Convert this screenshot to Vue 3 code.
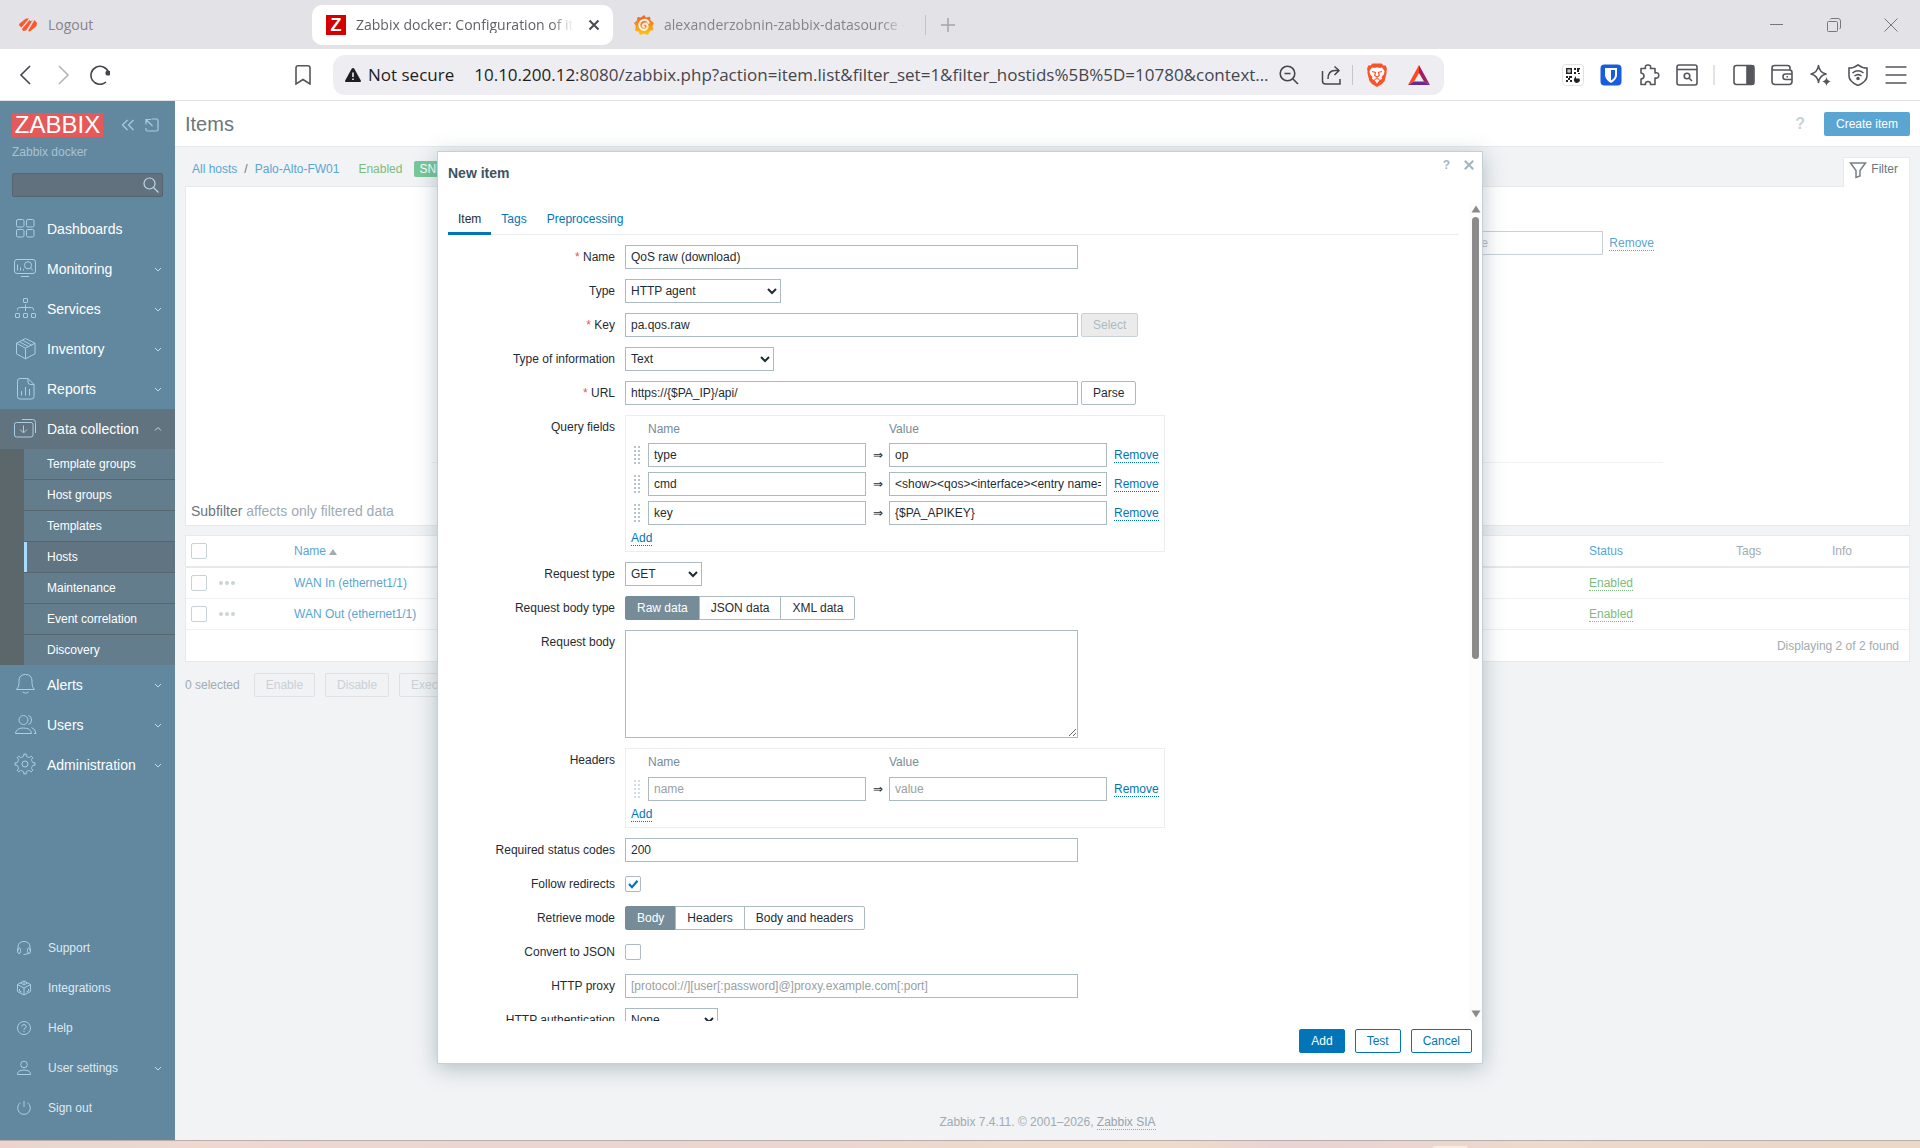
<template>
  <div class="window">
    <!-- Browser tabs -->
    <div class="tabstrip">
      <div class="tab tab-first">
        <svg class="i20" viewBox="0 0 20 20" fill="#fa582d">
          <path d="M1 9 8 3.500 11 3.500 3.500 12.500 1.500 11z M4 14 11.500 5 13 6.500 15 4.500 11 11 8 15.500 5 16z M10 16 16.500 5 19 8 18.500 11 12 16.500z" />
        </svg>
        <span>Logout</span>
      </div>
      <div class="tab tab-active">
        <span class="z-badge">Z</span>
        <span class="tab-title">Zabbix docker: Configuration of items</span>
        <button class="plain" aria-label="Close tab">
          <svg class="i12" viewBox="0 0 12 12" fill="none" stroke="#4a4b50" stroke-width="2"><path d="M1.500 1.500l9 9M10.500 1.500l-9 9" /></svg>
        </button>
      </div>
      <div class="tab tab-last">
        <svg class="i20" viewBox="0 0 20 20">
          <defs>
            <linearGradient id="graf" x1="0" y1="0" x2="0" y2="1"><stop offset="0" stop-color="#f15a29" /><stop offset="1" stop-color="#fdc80c" /></linearGradient>
          </defs>
          <path fill="url(#graf)" d="M10 0l2 2.500 4-.8.5 3.500L20 8l-1.500 3 1 4-3.500.8L14 20l-4-1.200L6 20l-1.500-3.500L1 15.500 1.800 11 0 8l3-2.500L3.500 2 7 2.500z" />
          <path fill="none" stroke="#f2f1f4" stroke-width="2" d="M15 8.500c-1-3-3.500-4-5.500-3.500-3 .5-5 3.500-4 6.500s4 4 6 3 2.800-3.500 1.500-5-3.500-1-4 .5.500 2.300 1.700 2" />
        </svg>
        <span class="tab-title">alexanderzobnin-zabbix-datasource - plugins</span>
      </div>
      <span class="tab-divider"></span>
      <button class="plain new-tab" aria-label="New tab">
        <svg class="i14" viewBox="0 0 14 14" fill="none" stroke="#a5a4ab" stroke-width="1.500"><path d="M7 0v14M0 7h14" /></svg>
      </button>
      <div class="win-buttons">
        <button class="plain" aria-label="Minimize"><svg class="i14" viewBox="0 0 14 14" fill="none" stroke="#77767c"><path d="M0 6.500h13" /></svg></button>
        <button class="plain" aria-label="Restore"><svg class="i14" viewBox="0 0 14 14" fill="none" stroke="#77767c"><rect x=".5" y="3.500" width="10" height="10" rx="1" /><path d="M3 1.500q.5-1 2-1h6q2.500 0 2.500 2.500v6q0 1.500-1 2" /></svg></button>
        <button class="plain" aria-label="Close"><svg class="i14" viewBox="0 0 14 14" fill="none" stroke="#77767c"><path d="M.5.500l13 13M13.500.500l-13 13" /></svg></button>
      </div>
    </div>

    <!-- Browser toolbar -->
    <div class="toolbar">
      <div class="nav-buttons">
        <button class="plain" aria-label="Back"><svg class="i20" viewBox="0 0 20 20" fill="none" stroke="#45464c" stroke-width="1.600"><path d="M14 1 5 10l9 9" /></svg></button>
        <button class="plain" aria-label="Forward"><svg class="i20" viewBox="0 0 20 20" fill="none" stroke="#b5b5ba" stroke-width="1.600"><path d="M6 1l9 9-9 9" /></svg></button>
        <button class="plain" aria-label="Reload"><svg class="i20" viewBox="0 0 20 20" fill="none" stroke="#45464c" stroke-width="1.600"><path d="M16 17A9 9 0 1 1 18.500 7.500" /><circle cx="18" cy="8" r="1.800" fill="#45464c" /></svg></button>
      </div>
      <button class="plain bookmark" aria-label="Bookmark"><svg class="i20" viewBox="0 0 20 20" fill="none" stroke="#55565c" stroke-width="1.600"><path d="M3 19V3q0-2.200 2.200-2.200h9.600Q17 .8 17 3v16l-7-4.500z" /></svg></button>
      <div class="address">
        <svg class="i16" viewBox="0 0 16 16"><path fill="#1d1d22" d="M8 1q.8 0 1.300.8l6.400 11.500q.8 1.700-1.200 1.700h-13q-2 0-1.200-1.700L6.700 1.800Q7.200 1 8 1z" /><path stroke="#eeedf2" stroke-width="1.600" d="M8 5.500v4.500M8 11.500v1.600" /></svg>
        <span class="secure">Not secure</span>
        <span class="url"><b>10.10.200.12</b>:8080/zabbix.php?action=item.list&amp;filter_set=1&amp;filter_hostids%5B%5D=10780&amp;context…</span>
        <button class="plain" aria-label="Zoom"><svg class="i20" viewBox="0 0 20 20" fill="none" stroke="#45464c" stroke-width="1.600"><circle cx="8.500" cy="8.500" r="7.300" /><path d="M14 14l5 5M5.500 8.500h6" /></svg></button>
        <button class="plain share" aria-label="Share"><svg class="i20" viewBox="0 0 20 20" fill="none" stroke="#45464c" stroke-width="1.500"><path d="M1.500 6v10q0 3 3 3H19v-5M13.500 1.500 18 5.500l-4.500 4.500M18 5.500h-4q-7 0-7 8.500" /></svg></button>
        <span class="bar-divider"></span>
        <button class="plain" aria-label="Shields">
          <svg class="i24" viewBox="0 0 24 24"><path fill="#fb542b" d="M7.500.500h9l2 2h2.300l1.200 3.500-.6 2 .2 2-2 8-2.600 3L12 24l-5-3-2.600-3-2-8 .2-2L2 6l1.200-3.500h2.300z" /><path fill="#fff" d="M7 4.500l2.500.5L12 4.300l2.500.7 2.500-.5 2.500 3.500-.5 3-2.500 3 .5 2-2.500 1L12 20.500 9.500 17 7 16l.5-2L5 11l-.5-3z" /><path fill="none" stroke="#fb542b" stroke-width="1.200" d="M7 8.500l3.500 1-.8 3 2.300 1.500 2.300-1.500-.8-3 3.500-1M9.500 16.500l2.500-1 2.500 1M12 14v1.500" /></svg>
        </button>
        <button class="plain bat" aria-label="Rewards">
          <svg class="i24" viewBox="0 0 24 24"><path fill="#ff4724" d="M12 2v8l-5 8.500L1 22z" /><path fill="#9e1f63" d="M12 2l11 20-6-3.500L12 10z" /><path fill="#662d91" d="M1 22l6-3.500h10l6 3.500z" /></svg>
        </button>
      </div>
      <div class="extensions">
        <button v-for="e in extensions" :key="e.name" class="plain" :class="e.name" :aria-label="e.name">
          <svg class="i22" viewBox="0 0 22 22" fill="none" stroke="#55565c" stroke-width="1.600" v-html="e.body"></svg>
        </button>
      </div>
    </div>

    <!-- Page -->
    <div class="page">
      <aside class="sidebar">
        <div class="brand">
          <a href="#" class="logo">ZABBIX</a>
          <button class="plain" aria-label="Collapse sidebar"><svg class="i14" viewBox="0 0 14 14" fill="none" stroke="#a9cbe0" stroke-width="1.200"><path d="M6.500 2 1.500 7l5 5M12.500 2l-5 5 5 5" /></svg></button>
          <button class="plain" aria-label="Hide sidebar"><svg class="i14" viewBox="0 0 14 14" fill="none" stroke="#a9cbe0" stroke-width="1.200"><path d="M6.500 1h5q1.500 0 1.500 1.500v9q0 1.500-1.500 1.500h-9Q1 13 1 11.500V10M1 6.500V1.500h5M1.500 2l6 6" /></svg></button>
        </div>
        <div class="server">Zabbix docker</div>
        <form class="search" @submit.prevent>
          <input type="text" aria-label="Search" />
          <button class="plain" aria-label="Search"><svg class="i16" viewBox="0 0 16 16" fill="none" stroke="#b9d8ea" stroke-width="1.200"><circle cx="6.500" cy="6.500" r="5.500" /><path d="M10.500 10.500l5 5" /></svg></button>
        </form>
        <nav class="menu">
          <template v-for="m in menu" :key="m.label">
            <a href="#" class="menu-item" :class="{ open: m.children }">
              <svg class="i24" viewBox="0 0 24 24" fill="none" stroke="#a9cfe6" v-html="m.icon"></svg>
              <span>{{ m.label }}</span>
              <svg v-if="m.arrow" class="chev" viewBox="0 0 8 8" fill="none" stroke="#c4dbe8"><path :d="m.children ? 'M1 5.500l3-3 3 3' : 'M1 3l3 3 3-3'" /></svg>
            </a>
            <div v-if="m.children" class="submenu">
              <a v-for="c in m.children" :key="c" href="#" :class="{ selected: c === 'Hosts' }">{{ c }}</a>
            </div>
          </template>
        </nav>
        <nav class="menu-bottom">
          <a v-for="m in bottomMenu" :key="m.label" href="#">
            <svg class="i16" viewBox="0 0 16 16" fill="none" stroke="#a9cfe6" v-html="m.icon"></svg>
            <span>{{ m.label }}</span>
            <svg v-if="m.arrow" class="chev" viewBox="0 0 8 8" fill="none" stroke="#c4dbe8"><path d="M1 3l3 3 3-3" /></svg>
          </a>
        </nav>
      </aside>

      <main class="main">
        <header class="page-header">
          <h1>Items</h1>
          <a href="#" class="help">?</a>
          <button class="create">Create item</button>
        </header>
        <div class="content">
          <div class="crumbs-row">
            <div class="crumbs">
              <a href="#">All hosts</a><span class="slash">/</span><a href="#">Palo-Alto-FW01</a>
              <span class="enabled">Enabled</span>
              <span class="badge">SNMP</span>
            </div>
            <button class="filter-tab">
              <svg class="i18" viewBox="0 0 18 18" fill="none" stroke="#75808a" stroke-width="1.500"><path d="M1.500 2h15L11 9.500V15l-4 1.500v-7z" /></svg>
              Filter
            </button>
          </div>
          <section class="panel filter">
            <div class="filter-row">
              <input type="text" placeholder="value" aria-label="Tag value" />
              <a href="#" class="dotted">Remove</a>
            </div>
            <div class="filter-line"></div>
            <div class="subfilter">Subfilter <span>affects only filtered data</span></div>
          </section>
          <table class="panel items">
            <colgroup><col class="c-check" /><col class="c-dots" /><col /><col class="c-status" /><col class="c-tags" /><col class="c-info" /></colgroup>
            <thead>
              <tr>
                <th><input type="checkbox" class="check" aria-label="Select all" /></th>
                <th></th>
                <th><a href="#">Name</a><i class="sort"></i></th>
                <th><a href="#">Status</a></th>
                <th>Tags</th>
                <th>Info</th>
              </tr>
            </thead>
            <tbody>
              <tr v-for="name in hostItems" :key="name">
                <td><input type="checkbox" class="check" :aria-label="name" /></td>
                <td><button class="plain dots" aria-label="More"><i></i><i></i><i></i></button></td>
                <td><a href="#">{{ name }}</a></td>
                <td><a href="#" class="dotted green">Enabled</a></td>
                <td></td>
                <td></td>
              </tr>
            </tbody>
            <tfoot>
              <tr><td colspan="6">Displaying 2 of 2 found</td></tr>
            </tfoot>
          </table>
          <div class="actions">
            <span>0 selected</span>
            <button v-for="a in ['Enable', 'Disable', 'Execute now']" :key="a" disabled>{{ a }}</button>
          </div>
        </div>
        <footer class="page-footer">Zabbix 7.4.11. © 2001–2026, <a href="#" class="dotted">Zabbix SIA</a></footer>
      </main>
    </div>
    <div class="desktop"><span></span></div>

    <!-- New item dialog -->
    <div class="overlay">
      <div class="modal" role="dialog" aria-labelledby="modal-title">
        <div class="modal-head">
          <h2 id="modal-title">New item</h2>
          <a href="#" class="modal-help">?</a>
          <button class="plain" aria-label="Close"><svg class="i10" viewBox="0 0 10 10" fill="none" stroke="#a3b4bd" stroke-width="2"><path d="M.8.800l8.400 8.400M9.200.800.8 9.200" /></svg></button>
        </div>
        <div class="modal-body">
          <div class="scroll-area">
            <div class="tabs">
              <a v-for="t in ['Item', 'Tags', 'Preprocessing']" :key="t" href="#" :class="{ active: t === tab }" @click.prevent="tab = t">{{ t }}</a>
            </div>
            <form class="form" @submit.prevent>
              <label for="name" class="req">Name</label>
              <div><input id="name" v-model="form.name" type="text" class="wide" /></div>

              <label for="type">Type</label>
              <div><select id="type" class="w-type"><option>HTTP agent</option></select></div>

              <label for="key" class="req">Key</label>
              <div class="with-btn"><input id="key" v-model="form.key" type="text" class="wide" /><button class="btn" disabled>Select</button></div>

              <label for="value-type">Type of information</label>
              <div><select id="value-type" class="w-info"><option>Text</option></select></div>

              <label for="url" class="req">URL</label>
              <div class="with-btn"><input id="url" v-model="form.url" type="text" class="wide" /><button class="btn">Parse</button></div>

              <template v-for="g in pairGroups" :key="g.label">
                <template v-if="g.label === 'Headers'">
                  <label for="request-type">Request type</label>
                  <div><select id="request-type" class="w-request"><option>GET</option></select></div>

                  <span class="label">Request body type</span>
                  <div class="radios" role="radiogroup">
                    <label v-for="o in ['Raw data', 'JSON data', 'XML data']" :key="o"><input v-model="form.bodyType" type="radio" name="body-type" :value="o" /><span>{{ o }}</span></label>
                  </div>

                  <label for="posts">Request body</label>
                  <div class="area"><textarea id="posts" class="wide"></textarea></div>
                </template>
                <span class="label">{{ g.label }}</span>
                <div>
                  <table class="pairs">
                    <thead>
                      <tr><th class="p-drag"></th><th>Name</th><th></th><th>Value</th><th></th></tr>
                    </thead>
                    <tbody>
                      <tr v-for="(r, i) in g.rows" :key="i">
                        <td class="p-drag"><span class="drag" :class="{ off: g.rows.length === 1 }"></span></td>
                        <td><input v-model="r.name" type="text" placeholder="name" :aria-label="g.label + ' name'" /></td>
                        <td class="p-arrow">⇒</td>
                        <td><input v-model="r.value" type="text" placeholder="value" :aria-label="g.label + ' value'" /></td>
                        <td class="p-remove"><a href="#" class="dotted">Remove</a></td>
                      </tr>
                    </tbody>
                    <tfoot>
                      <tr><td colspan="5"><a href="#" class="dotted">Add</a></td></tr>
                    </tfoot>
                  </table>
                </div>
              </template>

              <label for="codes">Required status codes</label>
              <div><input id="codes" v-model="form.codes" type="text" class="wide" /></div>

              <label for="follow">Follow redirects</label>
              <div class="check-row"><input id="follow" type="checkbox" class="check" checked /></div>

              <span class="label">Retrieve mode</span>
              <div class="radios" role="radiogroup">
                <label v-for="o in ['Body', 'Headers', 'Body and headers']" :key="o"><input v-model="form.retrieve" type="radio" name="retrieve" :value="o" /><span>{{ o }}</span></label>
              </div>

              <label for="to-json">Convert to JSON</label>
              <div class="check-row"><input id="to-json" type="checkbox" class="check" /></div>

              <label for="proxy">HTTP proxy</label>
              <div><input id="proxy" type="text" class="wide" placeholder="[protocol://][user[:password]@]proxy.example.com[:port]" /></div>

              <label for="auth">HTTP authentication</label>
              <div><select id="auth" class="w-auth"><option>None</option></select></div>
            </form>
          </div>
          <div class="scrollbar">
            <svg viewBox="0 0 10 8"><path fill="#8b8b8b" d="M5 .5 9.500 7.500H.5z" /></svg>
            <div class="track"><div class="thumb"></div></div>
            <svg viewBox="0 0 10 8"><path fill="#8b8b8b" d="M5 7.500.5.500h9z" /></svg>
          </div>
        </div>
        <div class="modal-foot">
          <button class="btn primary">Add</button>
          <button class="btn blue">Test</button>
          <button class="btn blue">Cancel</button>
        </div>
      </div>
    </div>
  </div>
</template>

<script setup>
import { ref, reactive } from 'vue'

const tab = ref('Item')

const form = reactive({
  name: 'QoS raw (download)',
  key: 'pa.qos.raw',
  url: 'https://{$PA_IP}/api/',
  bodyType: 'Raw data',
  codes: '200',
  retrieve: 'Body'
})

const pairGroups = reactive([
  {
    label: 'Query fields',
    rows: [
      { name: 'type', value: 'op' },
      { name: 'cmd', value: '<show><qos><interface><entry name="ethernet1/1">' },
      { name: 'key', value: '{$PA_APIKEY}' }
    ]
  },
  { label: 'Headers', rows: [{ name: '', value: '' }] }
])

const hostItems = ['WAN In (ethernet1/1)', 'WAN Out (ethernet1/1)']

// Toothed outline for the settings icon
const gear = (cx, cy, outer, inner, teeth) => {
  const pts = []
  for (let k = 0; k < teeth; k++) {
    const a = (k / teeth) * Math.PI * 2 - Math.PI / 2
    const step = Math.PI / teeth
    for (const [d, r] of [[-0.75, inner], [-0.4, inner + 0.4], [-0.32, outer], [0.32, outer], [0.4, inner + 0.4], [0.75, inner]]) {
      pts.push(`${(cx + Math.cos(a + d * step) * r).toFixed(2)} ${(cy + Math.sin(a + d * step) * r).toFixed(2)}`)
    }
  }
  return `M${pts.join('L')}Z`
}

const menu = [
  { label: 'Dashboards', icon: '<rect x="3.500" y="2.500" width="7.500" height="7.500" rx="1.500"/><rect x="13.500" y="2.500" width="7.500" height="7.500" rx="1.500"/><rect x="3.500" y="12.500" width="7.500" height="7.500" rx="1.500"/><rect x="13.500" y="12.500" width="7.500" height="7.500" rx="1.500"/>' },
  { label: 'Monitoring', arrow: true, icon: '<rect x="1.500" y="2.500" width="21" height="14" rx="2.500"/><path d="M8 19.500h8M4.500 7.500v6M7.500 10.500v3M10.500 12v1.500M17.500 11l2.500 2.500"/><circle cx="15" cy="8.300" r="3.600"/>' },
  { label: 'Services', arrow: true, icon: '<rect x="10.500" y="1.500" width="4" height="4" rx=".5"/><path d="M12.500 7.500V14M4.500 13.500v-1q0-2 2-2h12q2 0 2 2v1"/><rect x="2.500" y="16.500" width="4" height="4" rx=".5"/><rect x="10.500" y="16.500" width="4" height="4" rx=".5"/><rect x="18.500" y="16.500" width="4" height="4" rx=".5"/>' },
  { label: 'Inventory', arrow: true, icon: '<path d="M12.500 1.500 22 6.200v10.600l-9.500 5-9-5V6.200zM3.500 6.200l9 5 9.500-5M12.500 11.200v10.600M9.500 3.200l9 4.800M6.500 4.800l9 4.800"/>' },
  { label: 'Reports', arrow: true, icon: '<path d="M15 1.500H7q-2.500 0-2.500 2.500v15.500q0 2.500 2.500 2.500h11.500q2.500 0 2.500-2.500V7.500zM15 1.500V5q0 2.500 2.500 2.500H21M8.500 14v4.500M12.500 10v8.500M16.500 12v6.500"/>' },
  {
    label: 'Data collection',
    arrow: true,
    icon: '<rect x="1.500" y="5.500" width="18.500" height="14.500" rx="2"/><path d="M9 2.500h10.500q3 0 3 3V16M10.500 8.500v7M7 12.500l3.500 3.500 3.500-3.500"/>',
    children: ['Template groups', 'Host groups', 'Templates', 'Hosts', 'Maintenance', 'Event correlation', 'Discovery']
  },
  { label: 'Alerts', arrow: true, icon: '<path d="M3.500 16.500h18q-2.500-2.500-2.500-6V8q0-6.500-6.500-6.500T6 8v2.500q0 3.500-2.500 6zM9.500 19q3 2.500 6 0"/>' },
  { label: 'Users', arrow: true, icon: '<circle cx="10.500" cy="7" r="4.500"/><path d="M2.500 20.500q.5-5.500 8-5.500t8 5.500zM15.500 2.500q3 .5 3 4.500t-3 4.500M18.500 14.500q4 1.500 4.500 6h-2"/>' },
  { label: 'Administration', arrow: true, icon: `<path d="${gear(12, 11, 10, 7.6, 8)}" stroke-linejoin="round"/><circle cx="12" cy="11" r="3"/>` }
]

const bottomMenu = [
  { label: 'Support', icon: '<path d="M2 11V7.500Q2 1.500 8 1.500t6 6V11M1.500 9q3-2 3 .5v2q0 2-1.500 2T1.500 11zM14.500 9q-3-2-3 .5v2q0 2 1.500 2t1.500-2.500zM13 13q-1.500 1.500-5.500 1.500"/>' },
  { label: 'Integrations', icon: '<path d="M8 1l6.500 3.500v7L8 15l-6.500-3.500v-7zM1.500 4.500 8 8l6.500-3.500M8 8v7M4.500 2.800 8 5l3.500-2.200M3.500 9v2l2 1M12.500 9v2l-2 1M8 1v3"/>' },
  { label: 'Help', icon: '<circle cx="8" cy="8" r="6.500"/><path d="M5.800 6.500Q6 4.500 8 4.500t2.200 2Q10.200 8 8 8.800v1M8 10.800v1.400"/>' },
  { label: 'User settings', arrow: true, icon: '<circle cx="8" cy="4.500" r="3.300"/><path d="M1.500 14.500q0-4.500 6.500-4.500t6.500 4.500z"/>' },
  { label: 'Sign out', icon: '<path d="M4.500 2.800a6.300 6.300 0 1 0 7 0M8 1v6"/>' }
]

const extensions = [
  { name: 'qr', body: '<rect x=".5" y=".5" width="21" height="21" rx="3" fill="#fff" stroke="#e2e2e6" stroke-width="1"/><g fill="#222" stroke="none"><path d="M4 4h6v6H4zm1.500 1.500v3h3v-3z" fill-rule="evenodd"/><path d="M6.500 6.500h1v1h-1zM12 4h2v2h-2zM15 4h3v1.500h-1V8h-2V6zM12 8h2v2h-2zM16 9h2v1h-2zM4 12h2v2H4zM7 12h3v2H8v2H6v-2h1zM4 16h2v2H4zM8 16h2v2H8z"/><path d="M14 12v2.500h3.500A3 3 0 1 1 12.500 14z"/></g>' },
  { name: 'vault', body: '<rect x=".5" y=".5" width="21" height="21" rx="4" fill="#175ddc" stroke="none"/><path d="M5 4h12v7q0 4.500-6 8-6-3.500-6-8z" fill="#fff" stroke="none"/><path d="M11 6h4v5q0 3-4 5.500z" fill="#175ddc" stroke="none"/>' },
  { name: 'puzzle', body: '<path d="M3 4.500h4.500q-1-3.500 2.500-3.500t2.500 3.500H17V9q3.800-1 3.800 2.300T17 14v6.500h-4.500q.3-3-2.500-3t-2.500 3H3V15q3-.3 3-3T3 9z" stroke-linejoin="round"/>' },
  { name: 'find', body: '<rect x="1" y="1" width="20" height="20" rx="2"/><path d="M1 5.500h20" /><circle cx="11" cy="12" r="2.800"/><path d="M13 14l3 3"/>' },
  { name: 'panel-toggle', body: '<rect x="1" y="1.500" width="20" height="19" rx="2.500"/><path d="M14 2h6v18h-6z" fill="#55565c"/>' },
  { name: 'wallet', body: '<path d="M19 6V4q0-2.500-2.500-2.500H3.500Q1 1.500 1 4v13q0 3.500 3 3.500h14q3 0 3-3V8.500Q21 6 18.500 6H3Q1 6 1 4M21 10h-6.500q-2.500 0-2.500 2.500v.5q0 2.500 2.500 2.500H21M15.500 12.800h1.500"/>' },
  { name: 'sparkle', body: '<path d="M9.500 1.500q1 7 7.500 8.500-6.500 1.500-7.500 8.500-1-7-7.500-8.500 6.500-1.500 7.500-8.500z" stroke-linejoin="round"/><path d="M17.500 13q.5 3.500 4 4.500-3.500 1-4 4.500-.5-3.500-4-4.500 3.500-1 4-4.500z" fill="#55565c" stroke="none"/>' },
  { name: 'vpn', body: '<path d="M11 .8Q15 4 20 4v8q0 5.500-9 9.500-9-4-9-9.500V4q5 0 9-3.200z"/><path d="M5.500 9q5.500-4.500 11 0M7.500 12q3.500-2.800 7 0" /><circle cx="11" cy="14.500" r="1" fill="#55565c"/>' },
  { name: 'menu', body: '<path d="M.5 3h21M.5 11h21M.5 19h21"/>' }
]
</script>

<style>
body {
  margin: 0;
  background: #f1f3f5;
}
</style>

<style scoped>
* {
  box-sizing: border-box;
}

.window {
  position: relative;
  display: flex;
  flex-direction: column;
  min-height: 100vh;
  font-family: "Liberation Sans", Arial, sans-serif;
  font-size: 12px;
  line-height: 16px;
  color: #1f2c33;
}

a {
  color: inherit;
  text-decoration: none;
}

button,
input,
select,
textarea {
  font-family: inherit;
  font-size: 12px;
  margin: 0;
}

svg {
  display: block;
  flex: none;
}

.plain {
  display: flex;
  padding: 0;
  border: 0;
  background: none;
}

.i10 { width: 10px; height: 10px; }
.i12 { width: 12px; height: 12px; }
.i14 { width: 14px; height: 14px; }
.i16 { width: 16px; height: 16px; }
.i18 { width: 18px; height: 18px; }
.i20 { width: 20px; height: 20px; }
.i22 { width: 22px; height: 22px; }
.i24 { width: 24px; height: 24px; }
.chev { width: 8px; height: 8px; }

/* Browser */
.tabstrip {
  display: flex;
  align-items: center;
  height: 49px;
  background: #e3e2e7;
  font-family: "Open Sans", sans-serif;
  font-size: 14px;
  color: #85848b;
}

.tab {
  display: flex;
  align-items: center;
  gap: 10px;
  height: 40px;
}

.tab-first {
  width: 312px;
  padding-left: 18px;
}

.tab-active {
  width: 301px;
  padding: 0 13px 0 14px;
  border-radius: 10px;
  background: #fff;
  color: #5f5f66;
}

.tab-last {
  width: 312px;
  padding: 0 14px 0 21px;
}

.tab-title {
  flex: 1;
  overflow: hidden;
  white-space: nowrap;
  -webkit-mask-image: linear-gradient(90deg, #000 88%, transparent 98%);
  mask-image: linear-gradient(90deg, #000 88%, transparent 98%);
}

.z-badge {
  width: 20px;
  height: 20px;
  background: #d40000;
  color: #fff;
  font: bold 18px/20px "Liberation Sans", sans-serif;
  text-align: center;
}

.tab-divider {
  width: 1px;
  height: 20px;
  background: #c3c2c8;
}

.new-tab {
  margin-left: 15px;
}

.win-buttons {
  display: flex;
  gap: 43px;
  margin-left: auto;
  padding-right: 22px;
}

.toolbar {
  display: flex;
  align-items: center;
  height: 52px;
  border-bottom: 1px solid #e3e2e7;
  background: #fff;
}

.nav-buttons {
  display: flex;
  gap: 17px;
  padding-left: 16px;
}

.bookmark {
  margin-left: 183px;
}

.address {
  display: flex;
  flex: 1;
  align-items: center;
  min-width: 0;
  height: 40px;
  margin-left: 20px;
  padding: 0 13px 0 12px;
  border-radius: 12px;
  background: #eeedf2;
  font-family: "Open Sans", sans-serif;
  font-size: 17px;
  line-height: 24px;
  color: #45464c;
}

.secure {
  margin: 0 20px 0 7px;
  color: #1d1d22;
  white-space: nowrap;
}

.url {
  flex: 1;
  overflow: hidden;
  margin-right: 6px;
  white-space: nowrap;
}

.url b {
  font-weight: 400;
  color: #1d1d22;
}

.share {
  margin-left: 22px;
}

.bar-divider {
  width: 1px;
  height: 20px;
  margin: 0 12px 0 11px;
  background: #c6c5cb;
}

.bat {
  margin-left: 18px;
}

.extensions {
  display: flex;
  gap: 16px;
  padding: 0 13px 0 118px;
}

.panel-toggle {
  margin-left: 19px;
  position: relative;
}

.panel-toggle::before {
  content: "";
  position: absolute;
  left: -20px;
  top: 1px;
  width: 2px;
  height: 20px;
  background: #e3e2e7;
}

/* Sidebar */
.page {
  display: flex;
  flex: 1;
}

.sidebar {
  display: flex;
  flex: none;
  flex-direction: column;
  width: 175px;
  padding: 12px 0;
  background: #62889f;
  color: #fff;
}

.brand {
  display: flex;
  align-items: center;
  gap: 10px;
  padding: 0 16px 0 12px;
}

.logo {
  width: 91px;
  margin-right: 8px;
  background: #e45959;
  font-size: 24px;
  line-height: 24px;
  text-align: center;
}

.server {
  padding: 7px 12px 0;
  color: #a9c2d1;
}

.search {
  display: flex;
  align-items: center;
  height: 24px;
  margin: 13px 12px 12px;
  padding-right: 3px;
  border: 1px solid #56646d;
  border-radius: 2px;
  background: #61727e;
}

.search input {
  flex: 1;
  min-width: 0;
  border: 0;
  background: none;
}

.menu-item {
  display: flex;
  align-items: center;
  gap: 10px;
  height: 40px;
  padding: 0 13px;
  font-size: 14px;
}

.menu-item .chev,
.menu-bottom .chev {
  margin-left: auto;
}

.open {
  background: #61737e;
}

.submenu {
  display: flex;
  flex-direction: column;
  gap: 1px;
  padding-left: 24px;
  background: linear-gradient(90deg, #5c676c 24px, #56666f 24px);
}

.submenu a {
  height: 30px;
  padding-left: 23px;
  background: #637d8d;
  line-height: 30px;
}

.submenu .selected {
  padding-left: 20px;
  border-left: 3px solid #a8dcff;
  background: #607481;
}

.menu-bottom {
  margin-top: auto;
}

.menu-bottom a {
  display: flex;
  align-items: center;
  gap: 16px;
  height: 40px;
  padding: 0 13px 0 16px;
  color: #dde9f1;
}

/* Page content */
.main {
  display: flex;
  flex: 1;
  flex-direction: column;
  min-width: 0;
  background: #f1f3f5;
  color: #a0abb2;
}

.main a {
  color: #5ba5d3;
}

.page-header {
  display: flex;
  align-items: center;
  height: 46px;
  padding: 0 10px;
  border-bottom: 1px solid #e5e9eb;
  background: #fff;
}

.page-header h1 {
  flex: 1;
  margin: 0;
  font-size: 20px;
  line-height: 24px;
  font-weight: 400;
  color: #6c757b;
}

.page-header .help {
  margin-right: 19px;
  font-size: 16px;
  font-weight: 700;
  color: #c8d1d6;
}

.create {
  height: 24px;
  padding: 0 12px;
  border: 0;
  border-radius: 2px;
  background: #5ba5d3;
  color: #fff;
}

.content {
  padding: 10px 10px 0;
}

.crumbs-row {
  display: flex;
  justify-content: space-between;
}

.crumbs {
  display: flex;
  align-items: flex-start;
  padding: 4px 0 0 7px;
}

.slash {
  padding: 0 7px;
  color: #6c757b;
}

.enabled {
  padding: 0 12px 0 19px;
  color: #7dbb80;
}

.badge {
  padding: 0 5px;
  border-radius: 2px;
  background: #78c799;
  color: #fff;
}

.filter-tab {
  display: flex;
  gap: 4px;
  position: relative;
  height: 30px;
  margin-bottom: -1px;
  padding: 3px 11px 0 5px;
  border: 1px solid #e7eaec;
  border-bottom: 0;
  background: #fff;
  color: #6c757b;
  line-height: 16px;
}

.panel {
  border: 1px solid #e7eaec;
  background: #fff;
}

.filter {
  padding: 44px 5px 4px;
}

.filter-row {
  display: flex;
  justify-content: flex-end;
  align-items: center;
  gap: 6px;
  padding-right: 250px;
}

.filter-row input {
  width: 150px;
  height: 24px;
  padding: 0 5px;
  border: 1px solid #c8d1d6;
}

.filter-row input::placeholder {
  color: #b5bcc0;
}

.filter-line {
  height: 1px;
  margin: 207px 241px 38px;
  background: #f0f2f3;
}

.subfilter {
  font-size: 14px;
  line-height: 20px;
  color: #6c757b;
}

.subfilter span {
  color: #a0abb2;
}

.dotted {
  border-bottom: 1px dotted;
  line-height: 14px;
}

.main .green {
  color: #7dbb80;
}

.items {
  width: 100%;
  margin-top: 9px;
  table-layout: fixed;
  border-collapse: separate;
  border-spacing: 0;
}

.c-check { width: 28px; }
.c-dots { width: 75px; }
.c-status { width: 147px; }
.c-tags { width: 96px; }
.c-info { width: 82px; }

.items th,
.items td {
  height: 31px;
  padding: 0 0 0 5px;
  border-bottom: 1px solid #eff1f2;
  font-weight: 400;
  text-align: left;
}

.items th {
  height: 32px;
  border-bottom: 2px solid #e7eaec;
}

.items tfoot td {
  padding-right: 10px;
  border: 0;
  text-align: right;
}

.sort {
  display: inline-block;
  margin-left: 3px;
  border: 4px solid transparent;
  border-top: 0;
  border-bottom: 6px solid #a0abb2;
}

.dots {
  gap: 2px;
}

.dots i {
  width: 4px;
  height: 4px;
  border-radius: 50%;
  background: #ccd4d8;
}

.check {
  display: block;
  appearance: none;
  width: 16px;
  height: 16px;
  border: 1px solid #acbbc2;
  border-radius: 2px;
  background: #fff;
}

.items .check {
  border-color: #c8d1d6;
}

.check:checked {
  background: #fff url("data:image/svg+xml,%3Csvg xmlns='http://www.w3.org/2000/svg' viewBox='0 0 14 14'%3E%3Cpath d='M3 7l3 3.200 5.500-6.400' fill='none' stroke='%230275b8' stroke-width='2.200'/%3E%3C/svg%3E");
}

.actions {
  display: flex;
  align-items: center;
  gap: 10px;
  margin-top: 11px;
}

.actions span {
  margin-right: 4px;
}

.actions button {
  height: 24px;
  padding: 0 11px;
  border: 1px solid #dde2e5;
  border-radius: 2px;
  background: #f1f2f3;
  color: #c8d1d6;
}

.page-footer {
  margin-top: auto;
  padding-bottom: 10px;
  text-align: center;
}

.page-footer .dotted {
  color: #98a4ab;
}

.desktop {
  height: 8px;
  overflow: hidden;
  border-top: 1px solid #b9aeaa;
  background: linear-gradient(90deg, #ecd3cf, #eed8d0 10%, #ead5d2 35%, #eddccb 61%, #e8d3d6 67%, #edd9cd 80%, #ecd8c8);
}

.desktop span {
  display: block;
  width: 36px;
  height: 8px;
  margin: 5px 0 0 74.6%;
  border-radius: 3px;
  background: #f5ebe3;
}

/* Dialog */
.overlay {
  position: absolute;
  inset: 0;
  display: flex;
  justify-content: center;
  align-items: flex-start;
  padding-top: 151px;
}

.modal {
  display: flex;
  flex-direction: column;
  width: 1046px;
  height: calc(100vh - 235px);
  border: 1px solid #c5d0d6;
  background: #fff;
  box-shadow: 0 4px 20px rgba(60, 90, 105, 0.35);
}

.modal-head {
  display: flex;
  align-items: flex-start;
  height: 50px;
  padding: 5px 8px 0 10px;
}

.modal-head h2 {
  flex: 1;
  margin: 8px 0 0;
  font-size: 14px;
  line-height: 16px;
  color: #3c5563;
}

.modal-help {
  margin-right: 14px;
  font-weight: 700;
  color: #a9b8c0;
}

.modal-head .plain {
  margin-top: 3px;
}

.modal-body {
  display: flex;
  flex: 1;
  min-height: 0;
}

.scroll-area {
  flex: 1;
  overflow: hidden;
  padding: 0 10px;
}

.tabs {
  display: flex;
  margin-bottom: 10px;
  box-shadow: inset 0 -1px #ebeef0;
}

.tabs a {
  padding: 9px 10px 5px;
  border-bottom: 3px solid transparent;
  color: #0275b8;
}

.tabs .active {
  border-color: #0275b8;
  color: #1f2c33;
}

.form {
  display: grid;
  grid-template-columns: 167px 1fr;
  gap: 10px;
}

.form > label,
.form > .label {
  line-height: 24px;
  text-align: right;
}

.req::before {
  content: "* ";
  color: #e45959;
}

.form > div {
  display: flex;
}

.form .with-btn {
  gap: 3px;
}

.form .check-row {
  height: 24px;
  align-items: center;
}

.form input[type="text"],
.form textarea {
  height: 24px;
  padding: 0 5px;
  border: 1px solid #acbbc2;
  border-radius: 0;
  background: #fff;
  color: #1f2c33;
}

.form input::placeholder {
  color: #9a9fa3;
}

.form .wide {
  width: 453px;
}

.form textarea {
  height: 108px;
  resize: both;
}

.form select {
  height: 24px;
  padding: 0 1px;
  border: 1px solid #acbbc2;
  border-radius: 0;
  background-color: #fff;
  color: #1f2c33;
}

.w-type { width: 156px; }
.w-info { width: 149px; }
.w-request { width: 77px; }
.w-auth { width: 93px; }

.btn {
  height: 24px;
  padding: 0 11px;
  border: 1px solid #acbbc2;
  border-radius: 2px;
  background: #fff;
  color: #1f2c33;
}

.btn:disabled {
  border-color: #c8d1d6;
  background: #ebebeb;
  color: #acbbc2;
}

.btn.blue {
  border-color: #0275b8;
  color: #0275b8;
}

.btn.primary {
  border-color: #0275b8;
  background: #0275b8;
  color: #fff;
}

.radios label {
  display: flex;
  margin-left: -1px;
}

.radios label:first-child {
  margin-left: 0;
}

.radios input {
  position: absolute;
  opacity: 0;
}

.radios span {
  padding: 0 11px;
  border: 1px solid #acbbc2;
  line-height: 22px;
}

.radios label:first-child span {
  border-radius: 2px 0 0 2px;
}

.radios label:last-child span {
  border-radius: 0 2px 2px 0;
}

.radios input:checked + span {
  border-color: #768d99;
  background: #768d99;
  color: #fff;
}

.pairs {
  height: 80px;
  padding: 5px;
  border: 1px solid #ebeef0;
  border-spacing: 0;
}

.pairs th,
.pairs td {
  height: 29px;
  padding: 0 0 5px;
  font-weight: 400;
  text-align: left;
}

.pairs th {
  height: 22px;
  padding-bottom: 6px;
  color: #768d99;
}

.pairs tfoot td {
  height: 16px;
  padding: 0;
}

.pairs input {
  display: block;
  width: 218px;
}

.pairs .p-drag {
  width: 17px;
  padding-left: 3px;
}

.pairs .p-arrow {
  width: 23px;
  text-align: center;
}

.pairs .p-remove {
  padding-left: 7px;
}

.form .dotted {
  display: inline-block;
  color: #0275b8;
}

.drag {
  display: block;
  width: 6px;
  height: 18px;
  background: radial-gradient(circle at 1px 1px, #b7c4ca 1px, transparent 1px) 0 0 / 4px 4px;
}

.drag.off {
  opacity: 0.6;
}

.scrollbar {
  display: flex;
  flex-direction: column;
  align-items: center;
  width: 13px;
  padding: 3px 0;
  background: #fcfcfc;
}

.scrollbar svg {
  width: 10px;
  height: 8px;
}

.track {
  flex: 1;
  margin: 4px 0;
}

.thumb {
  width: 7px;
  height: 56%;
  border-radius: 4px;
  background: #8b8b8b;
}

.modal-foot {
  display: flex;
  justify-content: flex-end;
  gap: 10px;
  padding: 8px 10px 10px;
}
</style>
